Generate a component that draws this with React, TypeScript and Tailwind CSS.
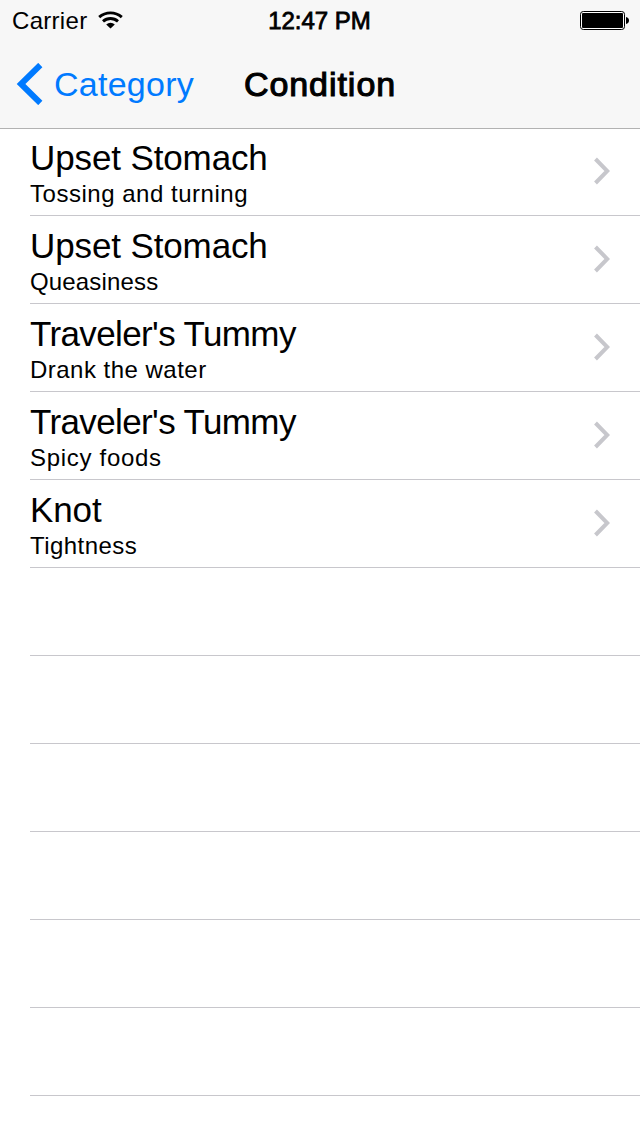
const conditions = [
  {
    title: "Upset Stomach",
    detail: "Tossing and turning",
    titleClass: "tracking-[-0.12px]",
    detailClass: "tracking-[0.52px]",
  },
  {
    title: "Upset Stomach",
    detail: "Queasiness",
    titleClass: "tracking-[-0.12px]",
    detailClass: "tracking-[0.16px]",
  },
  {
    title: "Traveler's Tummy",
    detail: "Drank the water",
    titleClass: "tracking-[-0.62px]",
    detailClass: "tracking-[0.48px]",
  },
  {
    title: "Traveler's Tummy",
    detail: "Spicy foods",
    titleClass: "tracking-[-0.62px]",
    detailClass: "tracking-[0.7px]",
  },
  {
    title: "Knot",
    detail: "Tightness",
    titleClass: "tracking-[-0.1px]",
    detailClass: "tracking-[0.45px]",
  },
];

const emptyRows = [1, 2, 3, 4, 5, 6];

const WifiIcon = () => (
  <svg width="26" height="18" viewBox="0 0 26 18" fill="none" stroke="#000">
    <path d="M1.2 6.2 A17 17 0 0 1 23.8 6.2" strokeWidth="2.9" />
    <path d="M5 10.4 A11.2 11.2 0 0 1 20 10.4" strokeWidth="2.9" />
    <path d="M12.5 17.6 L8.2 13.4 A6.4 6.4 0 0 1 16.8 13.4 Z" fill="#000" stroke="none" />
  </svg>
);

const BatteryIcon = () => (
  <svg width="49" height="19" viewBox="0 0 49 19">
    <rect x="0.5" y="0.5" width="44" height="18" rx="2.8" fill="#fff" stroke="#000" />
    <rect x="2" y="2" width="41" height="15" rx="1" fill="#000" />
    <path d="M46 6 C48 6.5 49 7.8 49 9.5 C49 11.2 48 12.5 46 13 Z" fill="#000" />
  </svg>
);

const App = () => {
  return (
    <main className="h-[1136px] w-[640px] overflow-hidden bg-white font-['Liberation_Sans',sans-serif] text-black">
      <header className="relative h-32 bg-[#f7f7f7] shadow-[0_1px_0_#b2b2b2]">
        {/* Status bar */}
        <div className="grid h-10 grid-cols-3 items-center pl-3 pr-[11px]">
          <div className="flex items-center gap-[11px]">
            <span className="pt-0.5 text-2xl leading-9 tracking-[0.3px]">Carrier</span>
            <WifiIcon />
          </div>
          <span className="pt-0.5 pr-0.5 text-center text-2xl leading-9 [-webkit-text-stroke:0.8px_#000]">
            12:47 PM
          </span>
          <div className="flex justify-end">
            <BatteryIcon />
          </div>
        </div>

        {/* Navigation bar */}
        <nav className="grid h-22 grid-cols-[1fr_auto_1fr] items-center">
          <button className="flex items-center gap-[11px] pl-4 text-[34px] leading-[88px] tracking-[0.25px] text-[#007aff]">
            <svg width="27" height="42" viewBox="0 0 27 42" fill="none">
              <path d="M24.3 2 L5 21 L24.3 40" stroke="#007aff" strokeWidth="6" />
            </svg>
            Category
          </button>
          <h1 className="text-[34px] leading-[88px] tracking-[0.95px] [-webkit-text-stroke:1.1px_#000]">
            Condition
          </h1>
        </nav>
      </header>

      <ul>
        {conditions.map((item, index) => (
          <li key={index} className="h-22 pl-[30px]">
            <div className="flex h-full items-center justify-between border-b border-[#c8c7cc] pr-[30px]">
              <div className="pt-1">
                <h2 className={`mb-0.5 text-[35px] leading-[38px] ${item.titleClass}`}>
                  {item.title}
                </h2>
                <p className={`text-2xl leading-[30px] ${item.detailClass}`}>
                  {item.detail}
                </p>
              </div>
              <svg width="18" height="28" viewBox="0 0 18 28" fill="none" className="mb-0.5">
                <path d="M3.5 2 L15.3 14 L3.5 26" stroke="#c7c7cc" strokeWidth="4" />
              </svg>
            </div>
          </li>
        ))}
        {emptyRows.map((row) => (
          <li key={row} className="h-22 pl-[30px]">
            <div className="h-full border-b border-[#c8c7cc]" />
          </li>
        ))}
      </ul>
    </main>
  );
};

export default App;
